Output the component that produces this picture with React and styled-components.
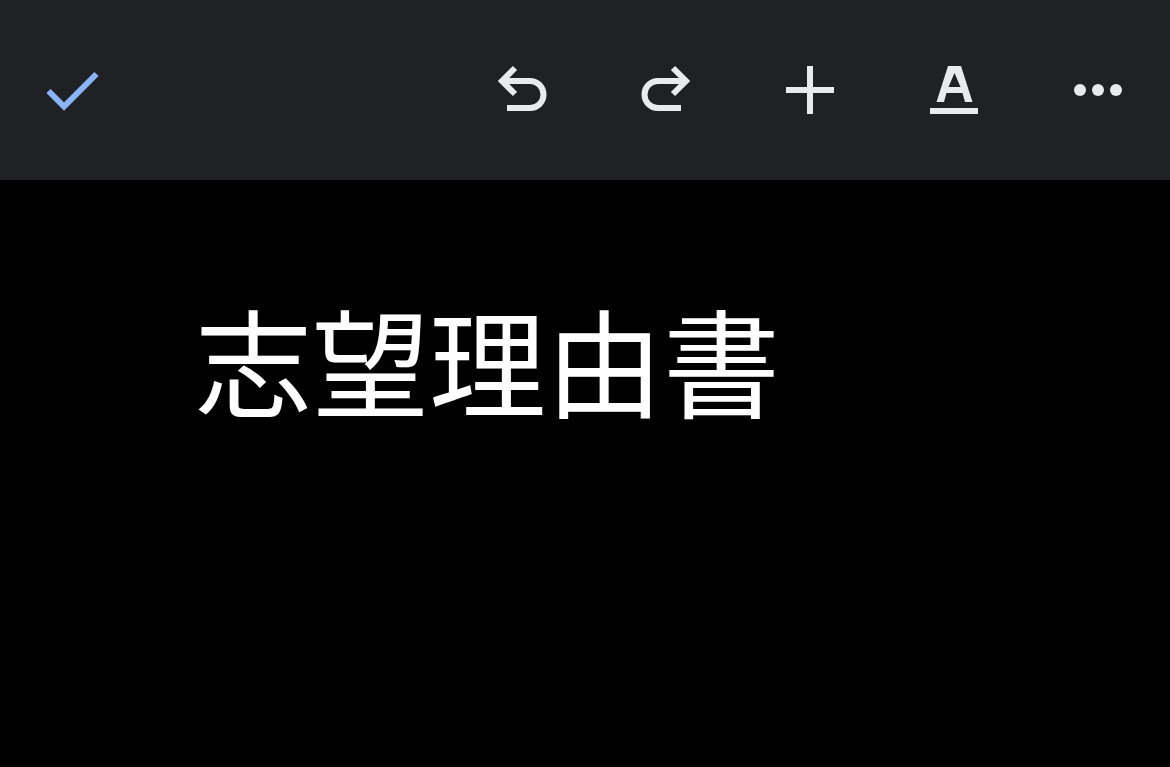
import React from 'react';
import styled, { createGlobalStyle } from 'styled-components';

const GlobalStyle = createGlobalStyle`
  html, body {
    margin: 0;
    height: 100%;
    background: #000;
  }
`;

const Page = styled.div`
  width: 1170px;
  height: 767px;
  overflow: hidden;
  display: flex;
  flex-flow: column nowrap;
  background: #000;
`;

const Toolbar = styled.header`
  flex: 0 0 180px;
  display: flex;
  align-items: center;
  justify-content: space-between;
  padding: 0 36px;
  background: #202124;
`;

const Actions = styled.div`
  display: flex;
  gap: 72px;
`;

const IconBox = styled.svg`
  display: block;
  width: 72px;
  height: 72px;
`;

const Line = styled.path`
  fill: none;
  stroke: ${(props) => props.$color || '#e8eaed'};
  stroke-width: 6;
  stroke-linejoin: miter;
`;

const Solid = styled.path`
  fill: #e8eaed;
  fill-rule: evenodd;
`;

const Document = styled.main`
  flex: 1 1 auto;
  padding: 110px 0 0 195px;
`;

const Title = styled.h1`
  margin: 0;
  font-family: "Noto Sans CJK JP", "Noto Sans", sans-serif;
  font-size: 117px;
  font-weight: 400;
  line-height: 136px;
  color: #fff;
`;

const Icon = ({ children }) => (
  <IconBox viewBox="0 0 72 72">{children}</IconBox>
);

export default function App () {
  return (
    <Page>
      <GlobalStyle/>
      <Toolbar>
        <Icon>
          <Line $color="#8ab4f8" d="M12.5 37 L28 52.5 L60.5 20"/>
        </Icon>
        <Actions>
          <Icon>
            <Line d="M21 54 H44 A13.5 13.5 0 0 0 44 27 H15"/>
            <Line d="M29 14 L16 27 L29 40"/>
          </Icon>
          <Icon>
            <Line d="M51 54 H28 A13.5 13.5 0 0 1 28 27 H57"/>
            <Line d="M43 14 L56 27 L43 40"/>
          </Icon>
          <Icon>
            <Line d="M36 12 V60 M12 36 H60"/>
          </Icon>
          <Icon>
            <Solid d="M30 12 H43 L54.5 48 H47 L44.5 39 H28.5 L26 48 H18.5 Z M30.5 33 H42.5 L36.5 19 Z"/>
            <Solid d="M12 54 H60 V60 H12 Z"/>
          </Icon>
          <Icon>
            <circle cx="18" cy="36" r="6" fill="#e8eaed"/>
            <circle cx="36" cy="36" r="6" fill="#e8eaed"/>
            <circle cx="54" cy="36" r="6" fill="#e8eaed"/>
          </Icon>
        </Actions>
      </Toolbar>
      <Document>
        <Title>志望理由書</Title>
      </Document>
    </Page>
  );
}
